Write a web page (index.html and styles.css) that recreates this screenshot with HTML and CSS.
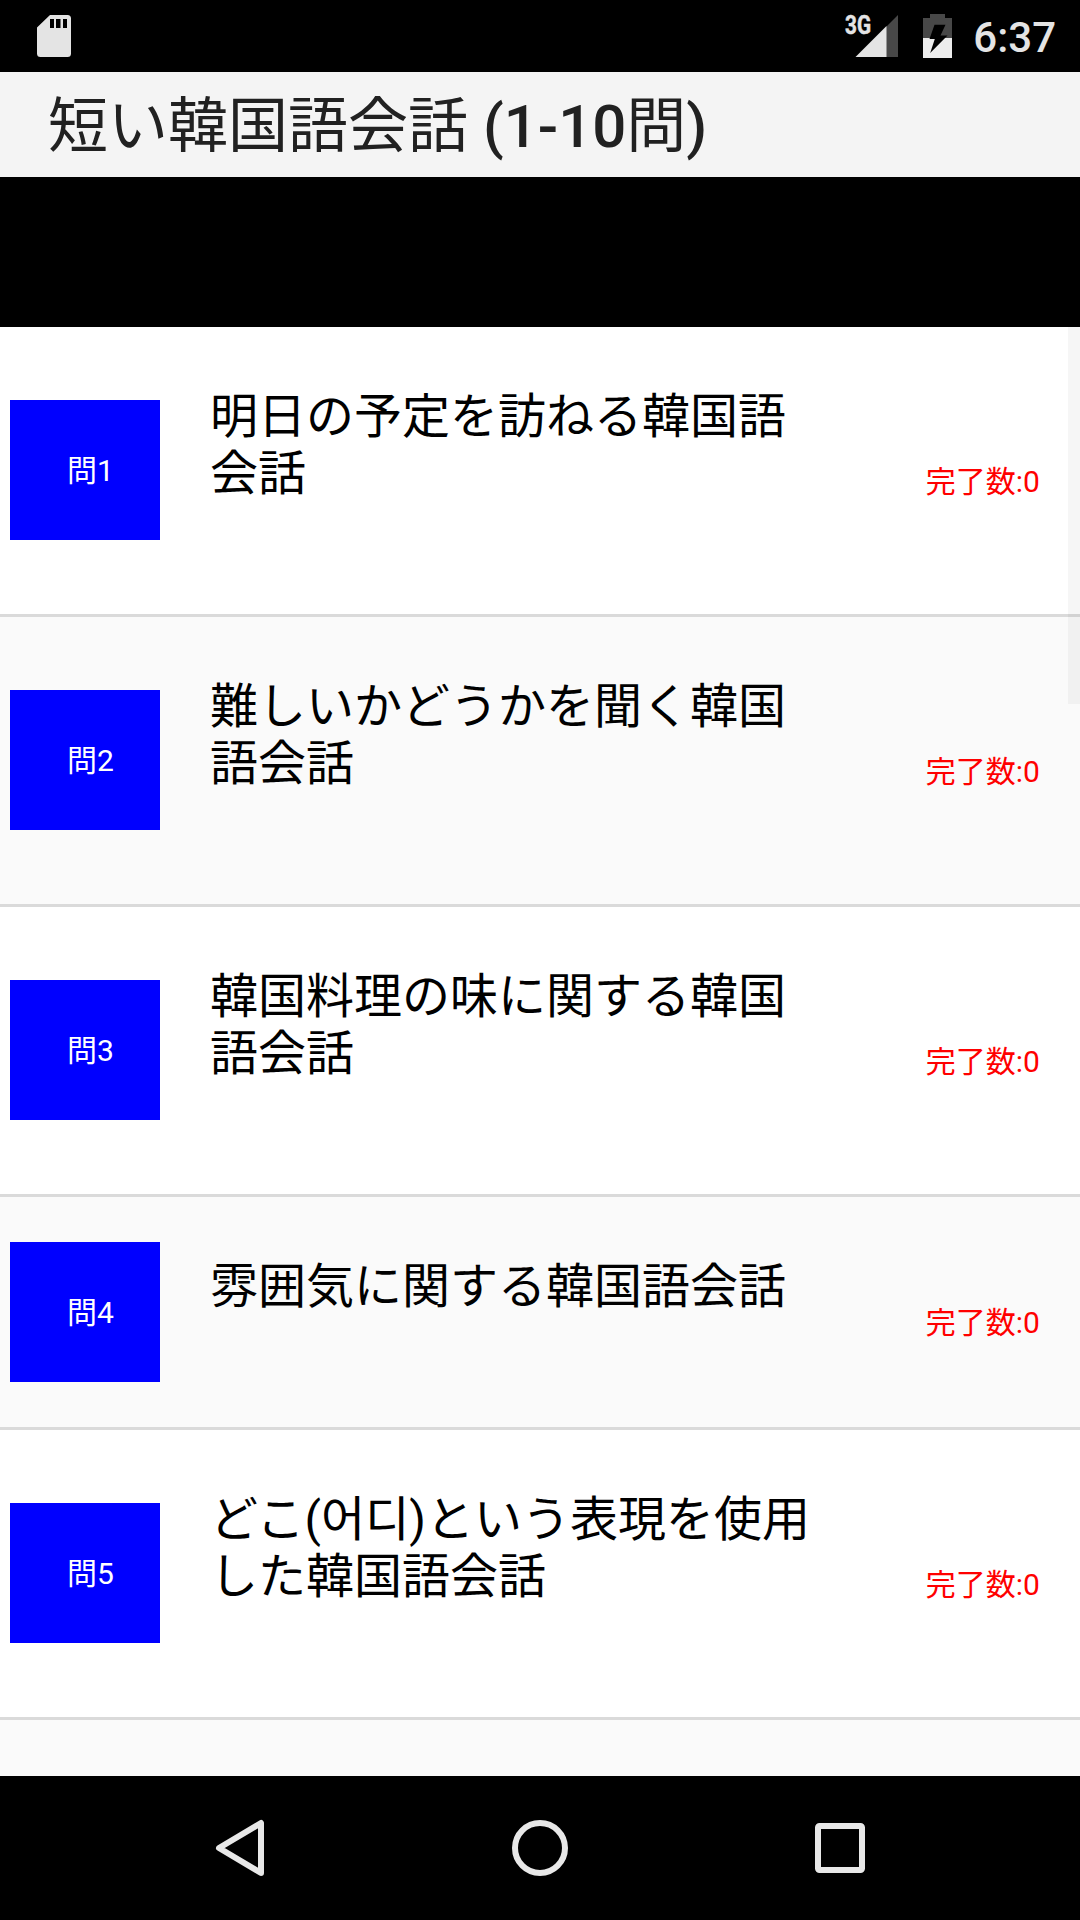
FILE: index.html
```html
<!DOCTYPE html>
<html lang="ja">
<head>
    <meta charset="UTF-8">
    <meta name="viewport" content="width=device-width, initial-scale=1.0">
    <title>短い韓国語会話</title>
    <link rel="stylesheet" href="styles.css">
</head>
<body>
    <div class="status-bar">
        <svg class="sd-icon" width="34" height="42" viewBox="0 0 34 42">
            <path fill="#e4e4e4" fill-rule="evenodd" d="M13 0H30.500Q34 0 34 3.500V38.500Q34 42 30.500 42H3.500Q0 42 0 38.500V12.500ZM13 4V13H17V4ZM19 4V13H23.500V4ZM26 4V13H30V4Z"/>
        </svg>
        <div class="status-right">
            <svg class="signal-icon" width="58" height="60" viewBox="-2 -8 58 60">
                <path fill="#484848" d="M42 13L54 1V43H42Z"/>
                <path fill="#e4e4e4" d="M11.500 43L42.500 12V43Z"/>
                <text class="network" x="1" y="19.500" textLength="26" lengthAdjust="spacingAndGlyphs">3G</text>
            </svg>
            <svg class="battery-icon" width="29" height="44" viewBox="0 0 29 44">
                <path fill="#484848" d="M7 0H22V4H29V24H0V4H7Z"/>
                <path fill="#ececec" d="M0 24H29V44H0Z"/>
                <path fill="#000" d="M11.500 10.700H22.500L17.500 21.500H24.500L7.200 39L11.800 25H6.500Z"/>
            </svg>
            <span class="clock">6:37</span>
        </div>
    </div>
    <div class="title-bar">
        <h1>短い韓国語会話 <span class="range">(1-10</span>問<span class="range">)</span></h1>
    </div>
    <div class="ad-space"></div>
    <div class="list">
        <div class="row">
            <div class="number">問1</div>
            <div class="name">明日の予定を訪ねる韓国語会話</div>
            <div class="count">完了数:0</div>
        </div>
        <div class="row">
            <div class="number">問2</div>
            <div class="name">難しいかどうかを聞く韓国語会話</div>
            <div class="count">完了数:0</div>
        </div>
        <div class="row">
            <div class="number">問3</div>
            <div class="name">韓国料理の味に関する韓国語会話</div>
            <div class="count">完了数:0</div>
        </div>
        <div class="row short">
            <div class="number">問4</div>
            <div class="name">雰囲気に関する韓国語会話</div>
            <div class="count">完了数:0</div>
        </div>
        <div class="row">
            <div class="number">問5</div>
            <div class="name">どこ(어디)という表現を使用した韓国語会話</div>
            <div class="count">完了数:0</div>
        </div>
        <div class="scrollbar"></div>
    </div>
    <div class="nav-bar">
        <svg width="60" height="60" viewBox="0 0 60 60">
            <path d="M51 5V55L9 30Z"/>
        </svg>
        <svg width="60" height="60" viewBox="0 0 60 60">
            <circle cx="30" cy="30" r="25"/>
        </svg>
        <svg width="60" height="60" viewBox="0 0 60 60">
            <rect x="8" y="8" width="44" height="44" rx="1.500"/>
        </svg>
    </div>
</body>
</html>
```

FILE: styles.css
```css
* {
    box-sizing: border-box;
}
body {
    display: flex;
    flex-direction: column;
    width: 1080px;
    height: 1920px;
    margin: 0;
    overflow: hidden;
    background: #000;
    font-family: Roboto, "Noto Sans CJK JP", sans-serif;
}
.status-bar {
    display: flex;
    justify-content: space-between;
    align-items: center;
    height: 72px;
    padding: 0 24px 0 37px;
}
.status-right {
    display: flex;
    align-items: center;
}
.network {
    fill: #e4e4e4;
    stroke: #e4e4e4;
    stroke-width: 0.5;
    font-size: 26px;
    font-weight: bold;
}
.battery-icon {
    margin-left: 23px;
}
.clock {
    margin-left: 21px;
    padding-top: 4px;
    color: #e4e4e4;
    font-size: 42px;
    font-weight: 500;
    line-height: 50px;
}
.title-bar {
    display: flex;
    align-items: center;
    height: 105px;
    padding: 5px 0 0 48px;
    background: #f4f4f4;
}
h1 {
    margin: 0;
    color: #212121;
    font-size: 60px;
    font-weight: 400;
    line-height: 70px;
}
.range {
    font-weight: 500;
}
.ad-space {
    height: 150px;
}
.list {
    position: relative;
    flex: 1;
    overflow: hidden;
    background: #fafafa;
}
.row {
    display: flex;
    align-items: center;
    height: 290px;
    padding: 0 40px 0 10px;
    border-bottom: 3px solid #dadada;
    background: #fff;
}
.row:nth-child(even) {
    background: #fafafa;
}
.row.short {
    height: 233px;
}
.number {
    width: 150px;
    height: 140px;
    margin-bottom: 1px;
    padding-left: 57px;
    background: #00f;
    color: #fff;
    font-size: 30px;
    line-height: 142px;
}
.name {
    align-self: flex-start;
    width: 610px;
    margin: 61px 0 0 50px;
    color: #000;
    font-size: 48px;
    line-height: 57px;
}
.count {
    margin: 22px 0 0 auto;
    color: #f00;
    font-size: 30px;
    line-height: 36px;
}
.scrollbar {
    position: absolute;
    top: 0;
    right: 0;
    width: 12px;
    height: 377px;
    background: rgba(0, 0, 0, 0.035);
}
.nav-bar {
    display: flex;
    justify-content: center;
    align-items: center;
    gap: 240px;
    height: 144px;
}
.nav-bar svg {
    fill: none;
    stroke: #e8e8e8;
    stroke-width: 6;
    stroke-linejoin: round;
}
```
